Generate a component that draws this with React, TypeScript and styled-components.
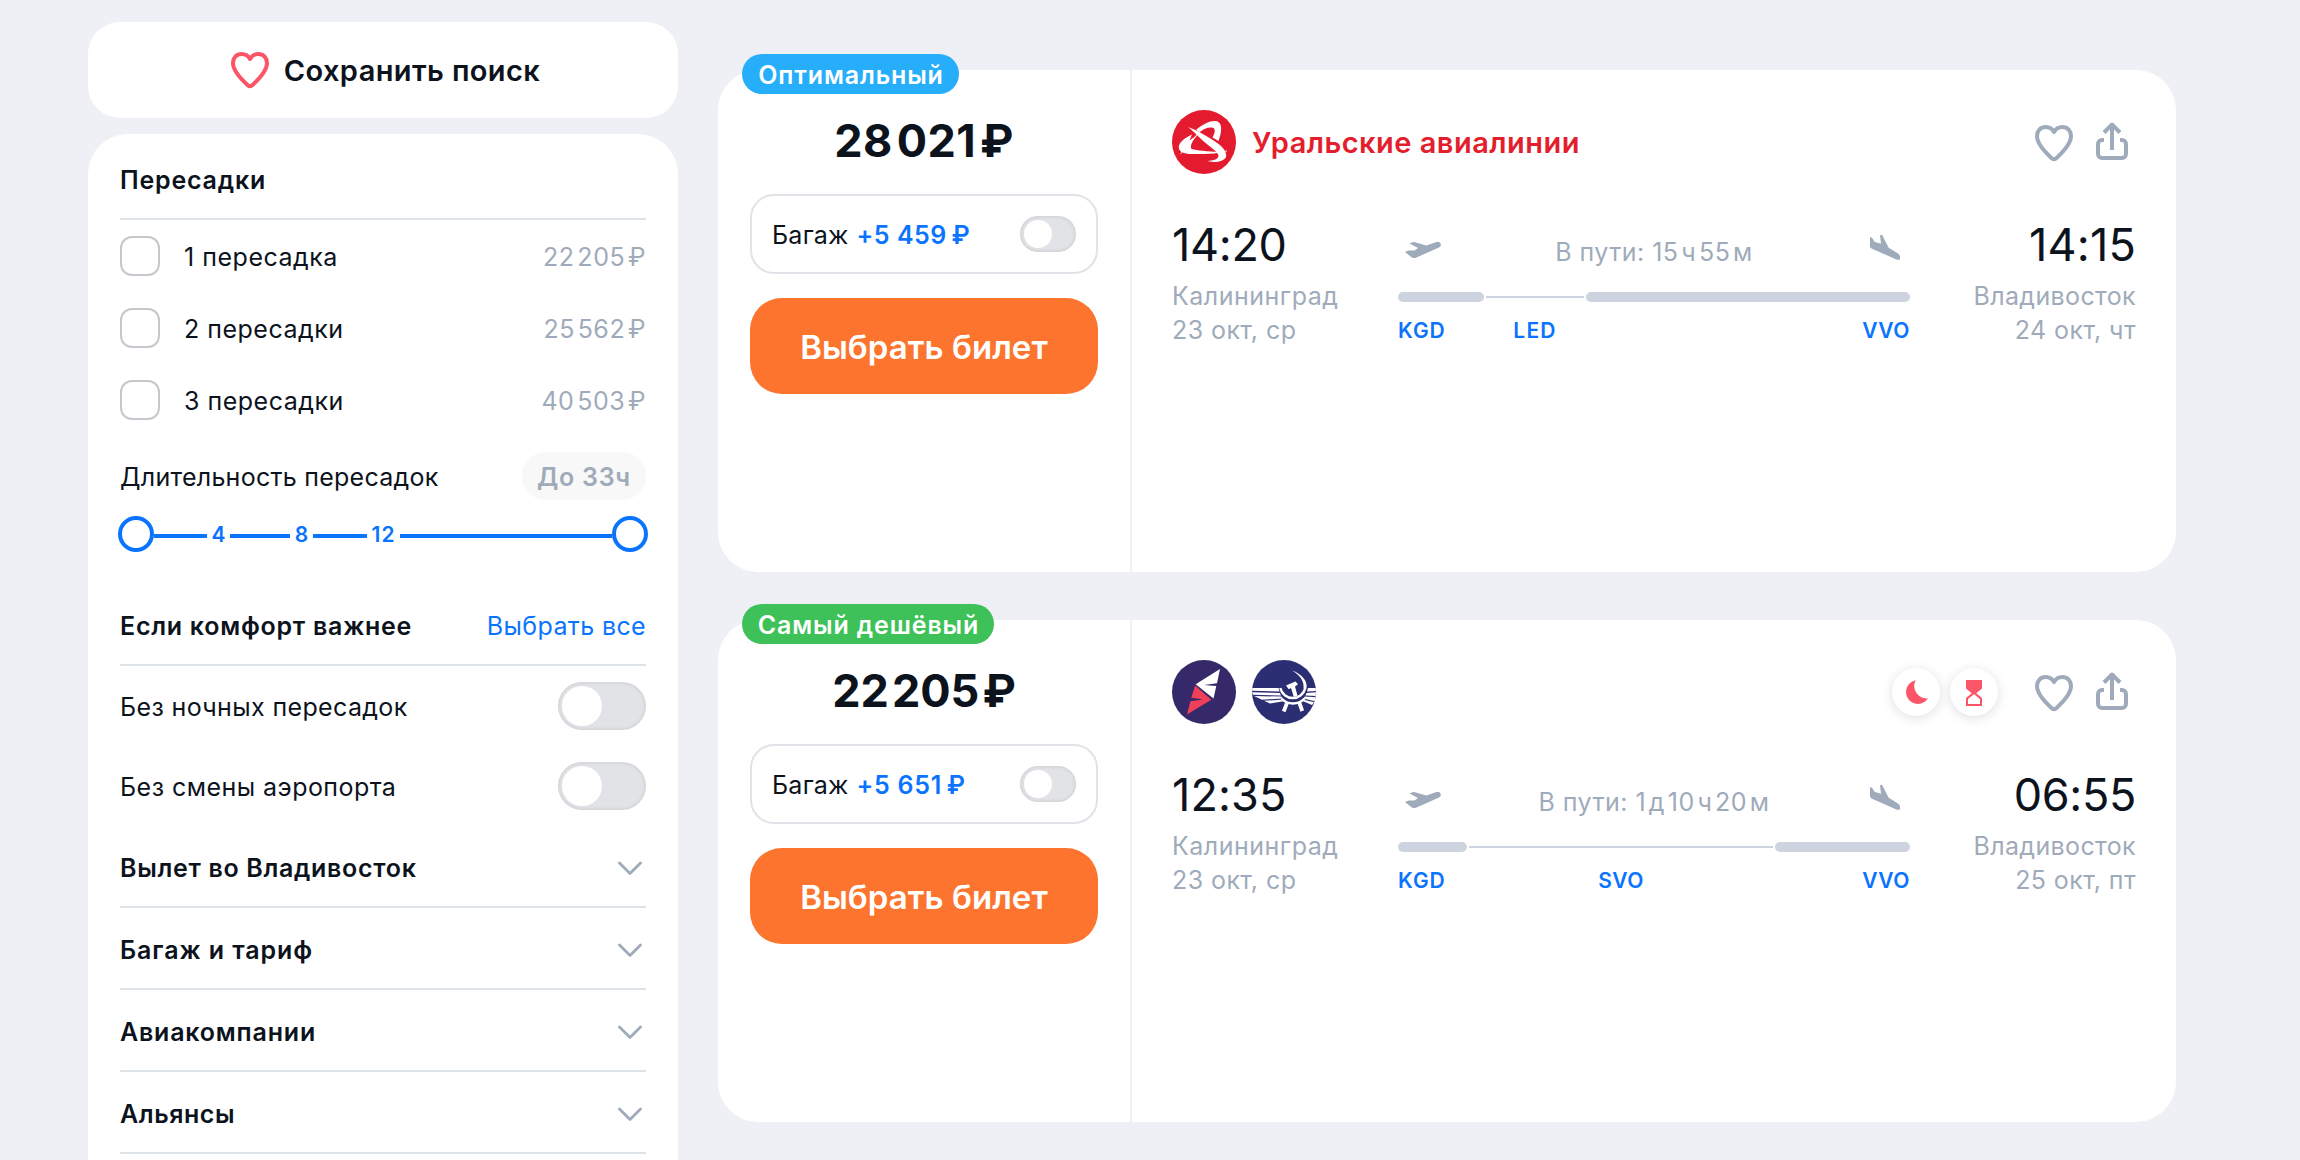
import React from 'react';
import styled, { createGlobalStyle } from 'styled-components';

const colors = {
  page: '#eff0f5',
  card: '#ffffff',
  ink: '#0c131d',
  muted: '#9fabba',
  line: '#dfe3ea',
  blue: '#0b74ff',
  red: '#fb5568',
  orange: '#fc742d',
};

const THIN = '\u2009';
const HAIR = '\u200a';

const GlobalStyle = createGlobalStyle`
  *, *::before, *::after { box-sizing: border-box; }
  html, body { margin: 0; padding: 0; }
  body {
    background: ${colors.page};
    color: ${colors.ink};
    font-family: Inter, "Noto Sans", sans-serif;
    overflow: hidden;
  }
  button { font-family: inherit; border: 0; cursor: pointer; }
`;

const Text = styled.span<{ $size?: number; $weight?: number; $color?: string; $track?: number; $drop?: number; $line?: number }>`
  font-size: ${p => p.$size ?? 25}px;
  font-weight: ${p => p.$weight ?? 400};
  color: ${p => p.$color ?? 'inherit'};
  letter-spacing: ${p => p.$track ?? 0.4}px;
  line-height: ${p => p.$line ?? 36}px;
  padding-top: ${p => (p.$drop ?? 0) * 2}px;
  white-space: nowrap;
`;

const Page = styled.div`
  display: flex;
  gap: 40px;
  width: 2300px;
  height: 1160px;
  padding-left: 88px;
  overflow: hidden;
  background: ${colors.page};
`;

/* Sidebar */

const Sidebar = styled.aside`
  display: flex;
  flex-direction: column;
  gap: 16px;
  flex: none;
  width: 590px;
  padding-top: 22px;
`;

const SaveButton = styled.button`
  display: flex;
  align-items: center;
  justify-content: center;
  gap: 15px;
  flex: none;
  height: 96px;
  padding: 1px 0 0 5px;
  border-radius: 32px;
  background: ${colors.card};
  color: ${colors.ink};
`;

const Filters = styled.section`
  flex: 1;
  padding: 4px 32px 0;
  border-radius: 40px 40px 0 0;
  background: ${colors.card};
`;

const SectionHead = styled.header`
  display: flex;
  align-items: center;
  justify-content: space-between;
  height: 82px;
  padding: 24px 0 20px;
  border-bottom: 2px solid ${colors.line};
`;

const SectionRow = styled(SectionHead)`
  padding-right: 4px;
`;

const OptionRow = styled.label`
  display: flex;
  align-items: center;
  gap: 24px;
  height: 72px;
`;

const OptionPrice = styled(Text)`
  margin-left: auto;
`;

const Checkbox = styled.span`
  width: 40px;
  height: 40px;
  border: 2px solid #c7c8cd;
  border-radius: 12px;
`;

const DurationRow = styled.div`
  display: flex;
  align-items: center;
  justify-content: space-between;
  height: 48px;
  margin-top: 16px;
`;

const DurationPill = styled.div`
  display: flex;
  align-items: center;
  justify-content: center;
  width: 124px;
  height: 48px;
  border-radius: 24px;
  background: #f8f8f8;
`;

const Slider = styled.div`
  display: flex;
  align-items: center;
  height: 36px;
  margin: 16px -2px 32px;
`;

const Thumb = styled.span`
  flex: none;
  width: 36px;
  height: 36px;
  border: 4px solid ${colors.blue};
  border-radius: 50%;
`;

const Track = styled.span<{ $width?: number }>`
  flex: ${p => (p.$width ? `0 0 ${p.$width}px` : '1')};
  height: 4px;
  margin-top: 4px;
  background: ${colors.blue};
`;

const Tick = styled(Text)<{ $width: number }>`
  width: ${p => p.$width}px;
  text-align: center;
`;

const ToggleRow = styled.div`
  display: flex;
  align-items: center;
  justify-content: space-between;
  height: 80px;
`;

const Toggle = styled.span<{ $small?: boolean }>`
  display: flex;
  align-items: center;
  flex: none;
  width: ${p => (p.$small ? 56 : 88)}px;
  height: ${p => (p.$small ? 36 : 48)}px;
  padding-left: 4px;
  border-radius: 24px;
  background: #e2e3e7;
  box-shadow: inset 0 0 4px rgba(0, 0, 0, 0.13);

  &::before {
    content: '';
    width: ${p => (p.$small ? 28 : 40)}px;
    height: ${p => (p.$small ? 28 : 40)}px;
    border-radius: 50%;
    background: #fff;
  }
`;

/* Tickets */

const Results = styled.main`
  display: flex;
  flex-direction: column;
  gap: 48px;
  flex: none;
  width: 1458px;
  padding-top: 70px;
`;

const Ticket = styled.article`
  position: relative;
  display: flex;
  flex: none;
  height: 502px;
  border-radius: 40px;
  background: ${colors.card};
`;

const Badge = styled.div<{ $color: string; $width: number }>`
  position: absolute;
  top: -16px;
  left: 24px;
  display: flex;
  align-items: center;
  justify-content: center;
  width: ${p => p.$width}px;
  height: 40px;
  padding-left: 1px;
  border-radius: 20px;
  background: ${p => p.$color};
  color: #fff;
`;

const Offer = styled.div`
  display: flex;
  flex-direction: column;
  flex: none;
  width: 414px;
  padding: 44px 32px 0;
  border-right: 2px solid #f1f1f4;
`;

const Price = styled(Text)`
  text-align: center;
`;

const Baggage = styled.div`
  display: flex;
  align-items: center;
  gap: 8px;
  height: 80px;
  margin-top: 26px;
  padding: 0 20px;
  border: 2px solid #e2e3e8;
  border-radius: 24px;

  ${Toggle} {
    margin-left: auto;
  }
`;

const BuyButton = styled.button`
  height: 96px;
  margin-top: 24px;
  padding: 2px 0 0;
  border-radius: 32px;
  background: ${colors.orange};
  color: #fff;
`;

const Details = styled.div`
  flex: 1;
  padding: 40px 40px 0;
`;

const DetailsHead = styled.div`
  display: flex;
  align-items: center;
  justify-content: space-between;
  height: 64px;
`;

const Carriers = styled.div`
  display: flex;
  align-items: center;
  gap: 16px;
`;

const Logo = styled.svg`
  width: 64px;
  height: 64px;
  border-radius: 50%;
`;

const Actions = styled.div`
  display: flex;
  gap: 10px;
`;

const ActionSlot = styled.span`
  display: flex;
  width: 48px;
  height: 48px;
`;

const Warnings = styled.div`
  display: flex;
  gap: 10px;
  margin-right: 22px;
`;

const Warning = styled(ActionSlot)`
  border-radius: 50%;
  background: #fff;
  box-shadow: 0 2px 12px rgba(0, 0, 0, 0.13);
`;

const Flight = styled.div`
  display: flex;
  margin-top: 44px;
`;

const Endpoint = styled.div<{ $end?: boolean }>`
  display: flex;
  flex-direction: column;
  flex: ${p => (p.$end ? '1' : '0 0 226px')};
  align-items: ${p => (p.$end ? 'flex-end' : 'flex-start')};
`;

const Time = styled(Text)`
  margin-bottom: 7px;
`;

const Route = styled.div`
  flex: none;
  width: 512px;
`;

const RouteTop = styled.div`
  display: flex;
  align-items: center;
  justify-content: space-between;
  height: 68px;
`;

const Segments = styled.div`
  display: flex;
  align-items: center;
  gap: 2px;
  height: 10px;
  margin-top: 6px;
`;

const Segment = styled.span<{ $share: number; $stop?: boolean }>`
  flex: ${p => p.$share} 0 0;
  height: ${p => (p.$stop ? 2 : 10)}px;
  border-radius: ${p => (p.$stop ? 0 : 5)}px;
  background: #cdd3df;
`;

const Codes = styled.div`
  display: flex;
  gap: 2px;
  margin-top: 12px;
`;

const Code = styled(Text)<{ $share: number; $align: string }>`
  display: flex;
  flex: ${p => p.$share} 0 0;
  justify-content: ${p => p.$align};
  min-width: 0;
`;

/* Icons */

const HEART =
  'M19 7C17.2 3.6 13.8 2 10.6 2C5.4 2 2 6 2 11C2 19 11 28 17 33.4Q19 35 21 33.4C27 28 36 19 36 11C36 6 32.6 2 27.4 2C24.2 2 20.8 3.6 19 7Z';

const HeartRed = () => (
  <svg width="38" height="37" viewBox="0 0 38 37">
    <path d={HEART} fill="none" stroke={colors.red} strokeWidth="4" strokeLinejoin="round" />
  </svg>
);

const HeartIcon = () => (
  <svg width="48" height="48" viewBox="-5 -7 48 48">
    <path d={HEART} fill="none" stroke={colors.muted} strokeWidth="4" strokeLinejoin="round" />
  </svg>
);

const ShareIcon = () => (
  <svg width="48" height="48" viewBox="-8 -4 48 48" fill="none" stroke={colors.muted} strokeWidth="4">
    <path d="M8 18H6a4 4 0 0 0-4 4v10a4 4 0 0 0 4 4h20a4 4 0 0 0 4-4V22a4 4 0 0 0-4-4h-2" />
    <path d="M16 28V3" />
    <path d="M8 10.5L16 2.5L24 10.5" strokeLinejoin="round" />
  </svg>
);

const Chevron = () => (
  <svg width="24" height="14" viewBox="0 0 24 14" fill="none">
    <path d="M1.5 2L12 12.5L22.5 2" stroke={colors.muted} strokeWidth="2.8" strokeLinecap="round" strokeLinejoin="round" />
  </svg>
);

const TakeoffIcon = () => (
  <svg width="48" height="48" viewBox="-7 -13.7 48 48" fill={colors.muted}>
    <path d="M31.5 .3L21.4 3.8L9 .3Q7.5 .1 4.6 1.8L13 6.3L9.5 8.8L3.5 8.9L0 10.2L6.5 15.6Q8.5 17 11 16L34 5.7Q36.4 4.4 35.8 2.2Q34.6 -.4 31.5 .3Z" />
  </svg>
);

const LandingIcon = () => (
  <svg width="48" height="48" viewBox="-8 -6.7 48 48" fill={colors.muted}>
    <path d="M0 2.3L2 3L4.5 7L11 9L10 .6L12 0L18.7 13L28 18.8Q30 20.2 30 22V24.5Q29 25.5 27 25L2 14Q0 13 0 11.5Z" />
  </svg>
);

const MoonIcon = () => (
  <svg width="48" height="48" viewBox="0 0 48 48" fill={colors.red}>
    <path d="M23.7 12.3A11.9 11.9 0 1 0 36 30.3A12.4 12.4 0 0 1 23.7 12.3Z" />
  </svg>
);

const HourglassIcon = () => (
  <svg width="48" height="48" viewBox="0 0 48 48" fill={colors.red}>
    <path fillRule="evenodd" d="M16 12H32V20.5L26.3 25.2L32 30V38H16V30L21.7 25.2L16 20.5ZM18 31V36H30V31L24 26.2Z" />
  </svg>
);

const UralLogo = () => (
  <Logo viewBox="0 0 64 64">
    <rect width="64" height="64" fill="#e41b2e" />
    <g fill="#fff">
      <path d="M24 20C31 13.5 40 10 45 11.3C50.5 13 50 22 46.500 31L40.500 27.400C43.200 22.500 43.500 19 41.300 17.900C37.500 16.600 31.500 18.800 27.700 22.300Z" />
      <path d="M20 24.500C12 28 6.300 33 6.800 38C7.500 42.500 13 44 21 44C31 44.300 41 43.600 48 42.500C42 41.200 29 41.400 19.500 39C17.500 35.500 21 29.500 27 23.500Q22 27.500 17.500 30.500Q19 27 20 24.500Z" />
      <path d="M16 17C26 20.500 35 26.500 43 31.500C50 36 55.500 42 54 47C51.500 52.200 42 53 35.500 51C41.500 50.500 46.800 49 46.500 45.500C45 40.500 33.500 34 26.500 26.500C22.500 22.500 20 20 16 17Z" />
    </g>
    <g stroke="#fff" strokeWidth=".8" fill="none">
      <path d="M8.500 44L28 21" />
      <path d="M40 43L55 41" />
    </g>
  </Logo>
);

const RossiyaLogo = () => (
  <Logo viewBox="0 0 64 64">
    <rect width="64" height="64" fill="#35296a" />
    <path d="M48 9L23.700 24.300L41.500 38.400L44.300 26L32 24.900L45 23.300Z" fill="#fff" />
    <path d="M23.200 25.400L39.300 39.700L15 54.500L18.400 41.200L31 39.600L19.300 37.800Z" fill="#f04059" />
  </Logo>
);

const AeroflotLogo = () => (
  <Logo viewBox="0 0 64 64">
    <rect width="64" height="64" fill="#2c2e74" />
    <g fill="#fff">
      <path d="M0 28H26.500L27.500 31.500L0 30.800Z" />
      <path d="M0 32.200L27.800 33L29 35.500L1 34.700Z" />
      <path d="M2 36L29.300 36.600L30.800 38.500L10 39.700Z" />
      <path d="M12 40.800L31.500 39.500L33 41L18 43.500Z" />
      <path d="M64 28H56L55 31.500L64 31Z" />
      <path d="M64 32.300L54.500 33L53.500 35.500L64 36Z" />
      <path d="M64 37.300L52.800 36.600L51.500 38.500L64 41.500Z" />
      <path d="M62 42.300L51 39.500L50 40.800L60 45Z" />
      <path d="M40 10.500C49 13.500 56 20.500 54.500 28.500L51.500 28.500C52.500 21.500 48 15 40 10.500Z" />
      <path d="M34 25.500L43.500 21.600L46 24.300L43 26.400L45.500 35.800L41.800 37L39 28L36.800 29.300Z" />
    </g>
    <g fill="none" stroke="#fff">
      <path d="M28.300 28A12.800 12.800 0 0 0 53.300 28" strokeWidth="2.400" />
      <path d="M29.500 38.500A15.500 15 0 0 0 52.500 38.500" strokeWidth="2.400" />
      <path d="M35.200 42.500L31.700 51.500M47.200 42.500L50.300 51" strokeWidth="3.800" />
    </g>
  </Logo>
);

/* Data */

const stops = [
  { label: '1 пересадка', track: 0.52, price: `22${HAIR}205${HAIR}₽` },
  { label: '2 пересадки', track: 0.5, price: `25${HAIR}562${HAIR}₽` },
  { label: '3 пересадки', track: 0.5, price: `40${HAIR}503${HAIR}₽` },
];

const comfort = [
  { label: 'Без ночных пересадок', track: 0.36 },
  { label: 'Без смены аэропорта', track: 0.46 },
];

const groups = [
  { label: 'Вылет во Владивосток', track: 0.68 },
  { label: 'Багаж и тариф', track: 0.91 },
  { label: 'Авиакомпании', track: 0.8 },
  { label: 'Альянсы', track: 0.55 },
];

type TicketData = {
  badge: string;
  badgeColor: string;
  badgeWidth: number;
  price: string;
  priceTrack: number;
  baggage: string;
  baggageTrack: number;
  logos: React.ReactNode;
  airline?: string;
  warnings?: boolean;
  depart: string;
  departTrack: number;
  arrive: string;
  arriveTrack: number;
  arriveDate: string;
  duration: string;
  parts: [number, number, number];
  stop: string;
  stopTrack: number;
};

const tickets: TicketData[] = [
  {
    badge: 'Оптимальный',
    badgeColor: '#27aefb',
    badgeWidth: 217,
    price: `28${HAIR}021${HAIR}₽`,
    priceTrack: 0.41,
    baggage: `+5 459${THIN}₽`,
    baggageTrack: 0.52,
    logos: <UralLogo />,
    airline: 'Уральские авиалинии',
    depart: '14:20',
    departTrack: -0.32,
    arrive: '14:15',
    arriveTrack: 0.2,
    arriveDate: '24 окт, чт',
    duration: `В пути: 15${HAIR}ч${HAIR}55${HAIR}м`,
    parts: [86, 98, 324],
    stop: 'LED',
    stopTrack: 1.2,
  },
  {
    badge: 'Самый дешёвый',
    badgeColor: '#3ec158',
    badgeWidth: 252,
    price: `22${HAIR}205${HAIR}₽`,
    priceTrack: -0.13,
    baggage: `+5 651${THIN}₽`,
    baggageTrack: 0.72,
    logos: (
      <>
        <RossiyaLogo />
        <AeroflotLogo />
      </>
    ),
    warnings: true,
    depart: '12:35',
    departTrack: 0.1,
    arrive: '06:55',
    arriveTrack: -0.33,
    arriveDate: '25 окт, пт',
    duration: `В пути: 1${HAIR}д${HAIR}10${HAIR}ч${HAIR}20${HAIR}м`,
    parts: [69, 304, 135],
    stop: 'SVO',
    stopTrack: 0.4,
  },
];

const TicketCard = ({ t }: { t: TicketData }) => (
  <Ticket>
    <Badge $color={t.badgeColor} $width={t.badgeWidth}>
      <Text $weight={600} $track={0.86} $drop={1}>{t.badge}</Text>
    </Badge>
    <Offer>
      <Price $size={45} $weight={700} $track={t.priceTrack} $line={54}>{t.price}</Price>
      <Baggage>
        <Text $track={0.22} $drop={1}>Багаж</Text>
        <Text $weight={600} $color={colors.blue} $track={t.baggageTrack} $drop={1}>{t.baggage}</Text>
        <Toggle $small />
      </Baggage>
      <BuyButton>
        <Text $size={33} $weight={600} $track={0.04}>Выбрать билет</Text>
      </BuyButton>
    </Offer>
    <Details>
      <DetailsHead>
        <Carriers>
          {t.logos}
          {t.airline && <Text $size={29} $weight={600} $color="#e31e2d" $track={0.47} $drop={1}>{t.airline}</Text>}
        </Carriers>
        <Actions>
          {t.warnings && (
            <Warnings>
              <Warning><MoonIcon /></Warning>
              <Warning><HourglassIcon /></Warning>
            </Warnings>
          )}
          <ActionSlot><HeartIcon /></ActionSlot>
          <ActionSlot><ShareIcon /></ActionSlot>
        </Actions>
      </DetailsHead>
      <Flight>
        <Endpoint>
          <Time $size={45} $track={t.departTrack} $line={54}>{t.depart}</Time>
          <Text $color={colors.muted} $track={0.5} $line={34}>Калининград</Text>
          <Text $color={colors.muted} $track={0.42} $line={34}>23 окт, ср</Text>
        </Endpoint>
        <Route>
          <RouteTop>
            <TakeoffIcon />
            <Text $color={colors.muted} $track={0.48}>{t.duration}</Text>
            <LandingIcon />
          </RouteTop>
          <Segments>
            {t.parts.map((share, i) => <Segment key={i} $share={share} $stop={i === 1} />)}
          </Segments>
          <Codes>
            <Code $share={t.parts[0]} $align="flex-start" $size={21} $weight={600} $color={colors.blue} $track={0.95} $line={34}>KGD</Code>
            <Code $share={t.parts[1]} $align="center" $size={21} $weight={600} $color={colors.blue} $track={t.stopTrack} $line={34}>{t.stop}</Code>
            <Code $share={t.parts[2]} $align="flex-end" $size={21} $weight={600} $color={colors.blue} $track={0.5} $line={34}>VVO</Code>
          </Codes>
        </Route>
        <Endpoint $end>
          <Time $size={45} $track={t.arriveTrack} $line={54}>{t.arrive}</Time>
          <Text $color={colors.muted} $track={0.38} $line={34}>Владивосток</Text>
          <Text $color={colors.muted} $track={0.42} $line={34}>{t.arriveDate}</Text>
        </Endpoint>
      </Flight>
    </Details>
  </Ticket>
);

export default function App() {
  return (
    <>
      <GlobalStyle />
      <Page>
        <Sidebar>
          <SaveButton>
            <HeartRed />
            <Text $size={29} $weight={600} $track={0.39}>Сохранить поиск</Text>
          </SaveButton>
          <Filters>
            <SectionHead>
              <Text $weight={600} $track={0.8}>Пересадки</Text>
            </SectionHead>
            {stops.map(s => (
              <OptionRow key={s.label}>
                <Checkbox />
                <Text $track={s.track} $drop={1}>{s.label}</Text>
                <OptionPrice $color={colors.muted} $track={0.52} $drop={1}>{s.price}</OptionPrice>
              </OptionRow>
            ))}
            <DurationRow>
              <Text $track={0.26} $drop={1}>Длительность пересадок</Text>
              <DurationPill>
                <Text $weight={600} $color={colors.muted} $track={0.73} $drop={1}>До 33ч</Text>
              </DurationPill>
            </DurationRow>
            <Slider>
              <Thumb />
              <Track $width={53} />
              <Tick $width={23} $size={21} $weight={600} $color={colors.blue} $track={0} $drop={1}>4</Tick>
              <Track $width={60} />
              <Tick $width={23} $size={21} $weight={600} $color={colors.blue} $track={0} $drop={1}>8</Tick>
              <Track $width={54} />
              <Tick $width={33} $size={21} $weight={600} $color={colors.blue} $track={1} $drop={1}>12</Tick>
              <Track />
              <Thumb />
            </Slider>
            <SectionHead>
              <Text $weight={600} $track={0.74}>Если комфорт важнее</Text>
              <Text $color={colors.blue} $track={0.36}>Выбрать все</Text>
            </SectionHead>
            {comfort.map(c => (
              <ToggleRow key={c.label}>
                <Text $track={c.track} $drop={1}>{c.label}</Text>
                <Toggle />
              </ToggleRow>
            ))}
            {groups.map(g => (
              <SectionRow key={g.label}>
                <Text $weight={600} $track={g.track}>{g.label}</Text>
                <Chevron />
              </SectionRow>
            ))}
          </Filters>
        </Sidebar>
        <Results>
          {tickets.map(t => <TicketCard key={t.badge} t={t} />)}
        </Results>
      </Page>
    </>
  );
}
